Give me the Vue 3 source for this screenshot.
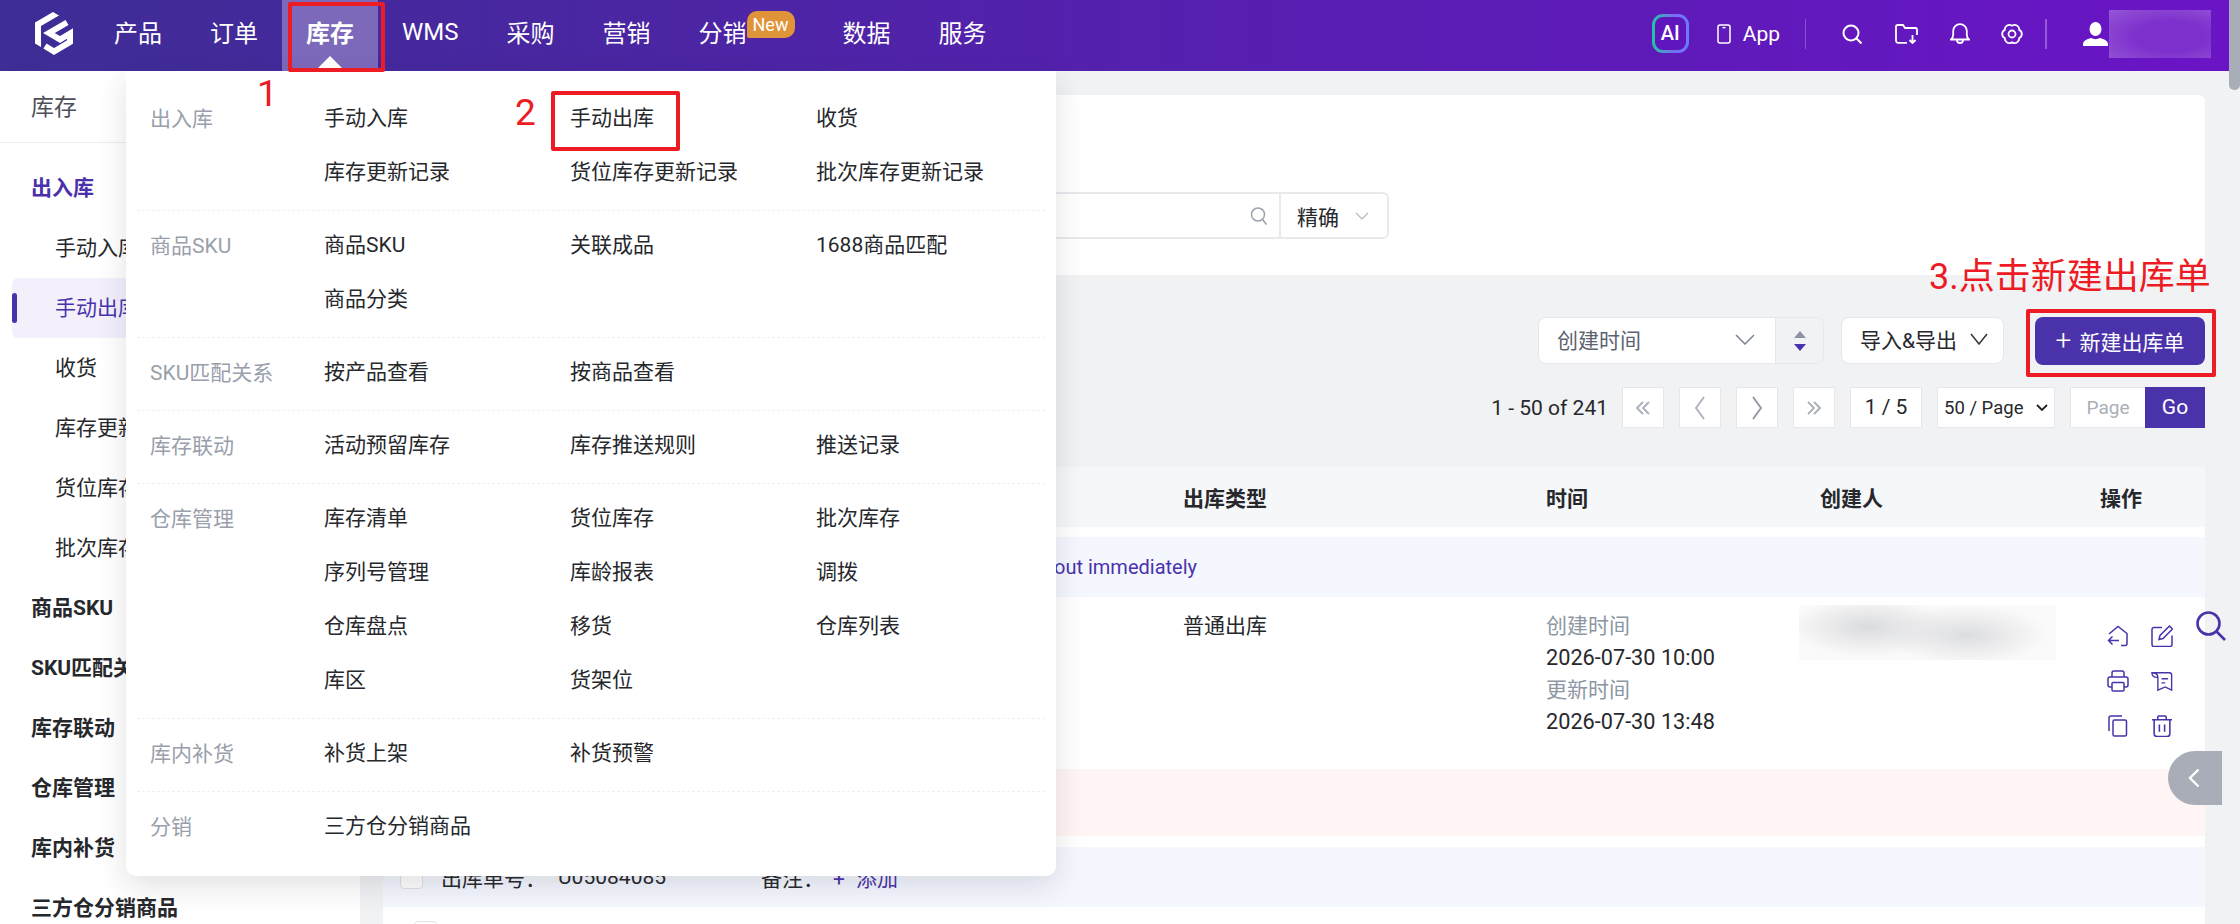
<template>
  <div class="page">
    <header class="topbar">
      <svg class="logo" viewBox="0 0 38 43">
        <polygon points="18,0 0,10.5 0,31.5 6,35 6,14 24,3.5" fill="#fff" />
        <path d="M32 10.5 L14 21 L25 27.5 L35 21.5 V30 L19 39.5 L10 34" fill="none" stroke="#fff" stroke-width="6" />
      </svg>
      <nav class="nav">
        <div v-for="item in navItems" :key="item.name" class="nav-item" :class="{ active: item.active }">
          {{ item.name }}
          <span v-if="item.badge" class="badge">{{ item.badge }}</span>
        </div>
      </nav>
      <div class="top-right">
        <div class="ai-box"><span>AI</span></div>
        <svg class="ic-phone" viewBox="0 0 14 20" fill="none" stroke="#fff" stroke-width="1.5">
          <rect x="1" y="1" width="12" height="18" rx="2" />
          <path d="M5.5 3.6h3" />
        </svg>
        <span class="app-text">App</span>
        <i class="vline"></i>
        <svg class="ic ic-search" viewBox="0 0 20 20" fill="none" stroke="#fff" stroke-width="2">
          <circle cx="9" cy="9" r="7.5" />
          <path d="M14.5 14.5 19.5 19.5" />
        </svg>
        <svg class="ic ic-folder" viewBox="0 0 23 20" fill="none" stroke="#fff" stroke-width="1.8">
          <path d="M12 18.8H3a2 2 0 0 1-2-2V2.5A1.5 1.5 0 0 1 2.5 1H8l2 3h10.5a1.5 1.5 0 0 1 1.5 1.5V11" />
          <path d="M17.5 11v8M14.5 16l3 3 3-3" />
        </svg>
        <svg class="ic ic-bell" viewBox="0 0 20 21" fill="none" stroke="#fff" stroke-width="1.8">
          <path d="M1 16.5c1.6-1.2 2.2-3 2.2-5V8a6.8 6.8 0 0 1 13.6 0v3.500c0 2 .6 3.800 2.200 5z" />
          <path d="M7 17a3 3 0 0 0 6 0" />
        </svg>
        <svg class="ic ic-gear" viewBox="0 0 22 22" fill="none" stroke="#fff" stroke-width="1.800">
          <path d="M11 2.700A4.600 4.600 0 0 1 18.190 6.850A4.600 4.600 0 0 1 18.190 15.150A4.600 4.600 0 0 1 11 19.300A4.600 4.600 0 0 1 3.810 15.150A4.600 4.600 0 0 1 3.810 6.850A4.600 4.600 0 0 1 11 2.700z" />
          <circle cx="11" cy="11" r="3.500" />
        </svg>
        <i class="vline wide"></i>
        <svg class="ic-user" viewBox="0 0 25 24" fill="#fff">
          <ellipse cx="12.500" cy="7" rx="6" ry="7" />
          <path d="M0 24v-2c0-3 4-5 8-6 2.500 1.500 6.500 1.500 9 0 4 1 8 3 8 6v2z" />
        </svg>
        <div class="user-blur"></div>
      </div>
    </header>

    <div class="body">
      <aside class="sidebar">
        <div class="side-title">库存</div>
        <div class="side-list">
          <div v-for="row in sideRows" :key="row.name" class="side-row" :class="row.type">{{ row.name }}</div>
        </div>
      </aside>

      <main class="main">
        <section class="filter-card">
          <div class="search-group">
            <div class="search-input">
              <svg class="search-ic" viewBox="0 0 18 20" fill="none" stroke="#9aa3ae" stroke-width="1.500">
                <circle cx="8" cy="8.500" r="6.500" />
                <path d="M12.500 13.500 16.500 18.500" />
              </svg>
            </div>
            <div class="search-mode">
              <span>精确</span>
              <svg class="chev small" viewBox="0 0 14 8" fill="none" stroke="#b3b8c1" stroke-width="1.200"><path d="M1 1l6 6 6-6" /></svg>
            </div>
          </div>
        </section>

        <div class="toolbar">
          <div class="sort-box">
            <div class="sort-select">
              <span>创建时间</span>
              <svg class="chev" viewBox="0 0 20 11" fill="none" stroke="#7b8490" stroke-width="1.500"><path d="M1 1l9 9 9-9" /></svg>
            </div>
            <div class="sort-dir">
              <i class="tri up"></i>
              <i class="tri down"></i>
            </div>
          </div>
          <div class="io-btn">
            导入&amp;导出
            <svg class="chev dark" viewBox="0 0 18 12" fill="none" stroke="#333" stroke-width="1.500"><path d="M1 1l8 10 8-10" /></svg>
          </div>
          <div class="create-btn"><span class="plus">+</span>新建出库单</div>
        </div>

        <div class="pager">
          <span class="pager-total">1 - 50 of 241</span>
          <div class="pg-btn">
            <svg viewBox="0 0 16 16" fill="none" stroke="#a9afb9" stroke-width="1.800"><path d="M8 2 2 8l6 6M14 2 8 8l6 6" /></svg>
          </div>
          <div class="pg-btn">
            <svg class="tall" viewBox="0 0 12 24" fill="none" stroke="#a9afb9" stroke-width="1.800"><path d="M10 1 2 12l8 11" /></svg>
          </div>
          <div class="pg-btn">
            <svg class="tall" viewBox="0 0 12 24" fill="none" stroke="#8d939e" stroke-width="1.800"><path d="M2 1l8 11-8 11" /></svg>
          </div>
          <div class="pg-btn">
            <svg viewBox="0 0 16 16" fill="none" stroke="#a9afb9" stroke-width="1.800"><path d="M2 2l6 6-6 6M8 2l6 6-6 6" /></svg>
          </div>
          <div class="pg-num">1 / 5</div>
          <div class="pg-size">
            <span>50 / Page</span>
            <svg viewBox="0 0 12 8" fill="none" stroke="#222" stroke-width="1.800"><path d="M1 1l5 5 5-5" /></svg>
          </div>
          <div class="pg-jump">
            <div class="pg-input">Page</div>
            <div class="pg-go">Go</div>
          </div>
        </div>

        <section class="table">
          <div class="tr thead">
            <span></span>
            <span>出库类型</span>
            <span>时间</span>
            <span>创建人</span>
            <span>操作</span>
          </div>
          <div class="band blue first">
            <span class="notice">out immediately</span>
          </div>
          <div class="tr item">
            <span></span>
            <div class="cell">普通出库</div>
            <div class="cell times">
              <div class="muted">创建时间</div>
              <div class="stamp">2026-07-30 10:00</div>
              <div class="muted">更新时间</div>
              <div class="stamp">2026-07-30 13:48</div>
            </div>
            <div class="cell"><div class="creator-blur"></div></div>
            <div class="actions">
              <svg viewBox="0 0 22 22" fill="none" stroke="#4a32ab" stroke-width="1.500">
                <path d="M2 9 11 1.500 20 8.500v10a2 2 0 0 1-2 2h-4" />
                <path d="M12 15.500H1.500M5.500 11.500l-4 4 4 4" />
              </svg>
              <svg viewBox="0 0 22 22" fill="none" stroke="#4a32ab" stroke-width="1.500">
                <path d="M11 2.500H3a2 2 0 0 0-2 2v15a2 2 0 0 0 2 2h16a2 2 0 0 0 2-2v-9" />
                <path d="M8 14.500l1-4L18.500 1l3 3-9.500 9.500z" />
              </svg>
              <svg viewBox="0 0 22 22" fill="none" stroke="#4a32ab" stroke-width="1.500">
                <path d="M5 7V3a2 2 0 0 1 2-2h8a2 2 0 0 1 2 2v4" />
                <path d="M5 17H3a2 2 0 0 1-2-2V9a2 2 0 0 1 2-2h16a2 2 0 0 1 2 2v6a2 2 0 0 1-2 2h-2" />
                <rect x="5" y="12.500" width="12" height="8.500" rx="1" />
              </svg>
              <svg viewBox="0 0 24 22" fill="none" stroke="#4a32ab" stroke-width="1.500">
                <path d="M1 2h19a2.500 2.500 0 0 1 2.500 2.500V21l-7-3.500L7.500 21V7C7.500 4 5 2 1 2c0 3 2 5 6 5" />
                <path d="M11.500 8.500h7M11.500 13h4" />
              </svg>
              <svg viewBox="0 0 20 22" fill="none" stroke="#4a32ab" stroke-width="1.500">
                <path d="M14 1H3a2 2 0 0 0-2 2v13" />
                <rect x="5" y="5" width="13.500" height="16" rx="1.500" />
              </svg>
              <svg viewBox="0 0 20 21" fill="none" stroke="#4a32ab" stroke-width="1.500">
                <path d="M.5 4.500h19M6 4.500V2a1 1 0 0 1 1-1h6a1 1 0 0 1 1 1v2.500" />
                <path d="M2.500 4.500V18a2.500 2.500 0 0 0 2.500 2.500h10a2.500 2.500 0 0 0 2.500-2.500V4.500" />
                <path d="M7.500 9v7M12.500 9v7" />
              </svg>
            </div>
          </div>
          <div class="band pink"></div>
          <div class="band blue second">
            <i class="check"></i>
            <span class="order-label">出库单号：</span>
            <span class="order-no">U05084085</span>
            <span class="note-label">备注：</span>
            <span class="note-add">+ 添加</span>
          </div>
          <div class="next-row"><i class="check"></i></div>
        </section>
      </main>
    </div>

    <!-- dropdown menu under the active nav item -->
    <div class="mega-menu">
      <div v-for="group in menuGroups" :key="group.label" class="menu-group">
        <div class="menu-label">{{ group.label }}</div>
        <div class="menu-links">
          <span v-for="(link, i) in group.links" :key="i" class="menu-link">{{ link }}</span>
        </div>
      </div>
    </div>

    <!-- tutorial marks painted on the screenshot -->
    <div class="mark box-nav"></div>
    <div class="mark box-link"></div>
    <div class="mark box-create"></div>
    <div class="mark-text num-1">1</div>
    <div class="mark-text num-2">2</div>
    <div class="mark-text step-3">3.点击新建出库单</div>

    <div class="scroll-thumb"></div>
    <svg class="float-search" viewBox="0 0 30 30" fill="none" stroke="#4a32ab" stroke-width="2.600">
      <circle cx="12.500" cy="12.500" r="11" />
      <path d="M20.500 20.500 29 29" />
    </svg>
    <div class="collapse-tab">
      <svg viewBox="0 0 12 20" fill="none" stroke="#fff" stroke-width="2.400"><path d="M10.500 1.500 2 10l8.500 8.500" /></svg>
    </div>
  </div>
</template>

<script setup>
const navItems = [
  { name: '产品' },
  { name: '订单' },
  { name: '库存', active: true },
  { name: 'WMS' },
  { name: '采购' },
  { name: '营销' },
  { name: '分销', badge: 'New' },
  { name: '数据' },
  { name: '服务' }
];

const sideRows = [
  { name: '出入库', type: 'head current' },
  { name: '手动入库', type: 'sub' },
  { name: '手动出库', type: 'sub selected' },
  { name: '收货', type: 'sub' },
  { name: '库存更新记录', type: 'sub' },
  { name: '货位库存', type: 'sub' },
  { name: '批次库存', type: 'sub' },
  { name: '商品SKU', type: 'head' },
  { name: 'SKU匹配关系', type: 'head' },
  { name: '库存联动', type: 'head' },
  { name: '仓库管理', type: 'head' },
  { name: '库内补货', type: 'head' },
  { name: '三方仓分销商品', type: 'head' }
];

const menuGroups = [
  { label: '出入库', links: ['手动入库', '手动出库', '收货', '库存更新记录', '货位库存更新记录', '批次库存更新记录'] },
  { label: '商品SKU', links: ['商品SKU', '关联成品', '1688商品匹配', '商品分类'] },
  { label: 'SKU匹配关系', links: ['按产品查看', '按商品查看'] },
  { label: '库存联动', links: ['活动预留库存', '库存推送规则', '推送记录'] },
  { label: '仓库管理', links: ['库存清单', '货位库存', '批次库存', '序列号管理', '库龄报表', '调拨', '仓库盘点', '移货', '仓库列表', '库区', '货架位'] },
  { label: '库内补货', links: ['补货上架', '补货预警'] },
  { label: '分销', links: ['三方仓分销商品'] }
];
</script>

<style>
html,
body {
  margin: 0;
  background: #f1f2f4;
}
</style>

<style scoped>
.page {
  position: relative;
  width: 2240px;
  height: 924px;
  overflow: hidden;
  background: #f1f2f4;
  font-family: Roboto, "Noto Sans CJK SC", sans-serif;
  font-size: 21px;
  color: #26282c;
}

/* top bar */
.topbar {
  display: flex;
  align-items: center;
  width: 2229px;
  height: 71px;
  background: linear-gradient(90deg, #3e2d95, #6a14c6);
  color: #fff;
}

.logo {
  width: 38px;
  height: 43px;
  margin: 0 17px 4px 35px;
  flex: none;
}

.nav {
  display: flex;
  height: 100%;
}

.nav-item {
  position: relative;
  display: flex;
  align-items: center;
  padding: 0 24px 8px;
  font-size: 24px;
  white-space: nowrap;
}

.nav-item.active {
  background: #7c69ba;
  font-weight: 700;
}

.nav-item.active::after {
  content: "";
  position: absolute;
  left: 36px;
  bottom: 3px;
  border-left: 12px solid transparent;
  border-right: 12px solid transparent;
  border-bottom: 12px solid #fff;
}

.badge {
  width: 48px;
  height: 27px;
  margin-top: -14px;
  border-radius: 10px 10px 10px 2px;
  background: #e0943a;
  font-size: 18px;
  line-height: 27px;
  text-align: center;
}

.top-right {
  display: flex;
  align-items: center;
  margin-left: auto;
  height: 100%;
  padding-bottom: 4px;
  box-sizing: border-box;
}

.ai-box {
  width: 37px;
  height: 39px;
  padding: 3px;
  box-sizing: border-box;
  border-radius: 11px;
  background: linear-gradient(90deg, #1fc8a0, #7a6cf5 60%, #6a7cff);
}

.ai-box span {
  display: block;
  height: 100%;
  border-radius: 8px;
  background: #5f17bd;
  font-size: 20px;
  font-weight: 500;
  line-height: 33px;
  text-align: center;
}

.ic-phone {
  width: 14px;
  height: 20px;
  margin-left: 28px;
}

.app-text {
  margin-left: 12px;
  font-size: 21px;
}

.vline {
  width: 1px;
  height: 30px;
  margin-left: 25px;
  background: rgba(255, 255, 255, 0.25);
}

.vline.wide {
  width: 2px;
  height: 30px;
  margin-left: 22px;
  background: rgba(255, 255, 255, 0.3);
}

.ic {
  height: 20px;
  flex: none;
}

.ic-search {
  width: 20px;
  margin-left: 36px;
}

.ic-folder {
  width: 23px;
  margin-left: 33px;
}

.ic-bell {
  width: 20px;
  height: 21px;
  margin-left: 32px;
}

.ic-gear {
  width: 22px;
  height: 22px;
  margin-left: 31px;
}

.ic-user {
  width: 25px;
  height: 24px;
  margin-left: 36px;
}

.user-blur {
  width: 102px;
  height: 48px;
  margin-left: 1px;
  margin-right: 18px;
  background: radial-gradient(ellipse at 60% 55%, #7d30cc 40%, #9a5bd8 110%);
}

/* sidebar + main */
.body {
  display: flex;
  height: 853px;
}

.sidebar {
  flex: none;
  width: 360px;
  height: 100%;
  background: #fff;
}

.side-title {
  height: 71px;
  padding-left: 31px;
  border-bottom: 1px solid #eceef1;
  font-size: 23px;
  line-height: 74px;
  color: #4c5058;
}

.side-list {
  padding-top: 15px;
}

.side-row {
  position: relative;
  height: 60px;
  line-height: 60px;
  white-space: nowrap;
}

.side-row.head {
  padding-left: 31px;
  font-weight: 700;
}

.side-row.current {
  color: #4a32ab;
}

.side-row.sub {
  padding-left: 55px;
}

.side-row.selected {
  margin-left: 12px;
  padding-left: 43px;
  border-radius: 6px 0 0 6px;
  background: #f3f0fc;
  color: #4a32ab;
}

.side-row.selected::before {
  content: "";
  position: absolute;
  left: 0;
  top: 15px;
  width: 5px;
  height: 30px;
  border-radius: 3px;
  background: #4a32ab;
}

.main {
  flex: 1;
  min-width: 0;
  padding: 24px 35px 0 23px;
}

.filter-card {
  display: flex;
  justify-content: flex-end;
  height: 180px;
  padding: 97px 816px 0 0;
  box-sizing: border-box;
  border-radius: 6px 6px 0 0;
  background: #fff;
}

.search-group {
  display: flex;
  height: 47px;
  box-sizing: border-box;
  border: 2px solid #e8e9ed;
  border-radius: 6px;
}

.search-input {
  display: flex;
  align-items: center;
  justify-content: flex-end;
  width: 560px;
  padding-right: 11px;
  box-sizing: border-box;
  border-right: 2px solid #e8e9ed;
}

.search-ic {
  width: 18px;
  height: 20px;
}

.search-mode {
  display: flex;
  align-items: center;
  width: 106px;
  padding-left: 16px;
  box-sizing: border-box;
}

.chev {
  width: 20px;
  height: 11px;
  flex: none;
}

.chev.small {
  width: 14px;
  height: 8px;
  margin-left: 16px;
}

.toolbar {
  display: flex;
  justify-content: flex-end;
  gap: 17px;
  margin-top: 42px;
}

.sort-box {
  display: flex;
  width: 286px;
  height: 47px;
  box-sizing: border-box;
  border: 1px solid #e6e7ec;
  border-radius: 8px;
  background: #fff;
  overflow: hidden;
}

.sort-select {
  display: flex;
  align-items: center;
  justify-content: space-between;
  flex: 1;
  padding: 0 20px 3px 18px;
  color: #5c6370;
}

.sort-dir {
  display: flex;
  flex-direction: column;
  align-items: center;
  justify-content: center;
  gap: 6px;
  width: 47px;
  border-left: 1px solid #e6e7ec;
  background: #f1f2f4;
}

.tri {
  border-left: 6px solid transparent;
  border-right: 6px solid transparent;
}

.tri.up {
  border-bottom: 7px solid #8c93a0;
}

.tri.down {
  border-top: 7px solid #4a32ab;
}

.io-btn {
  display: flex;
  align-items: center;
  gap: 13px;
  width: 163px;
  height: 47px;
  padding: 0 0 3px 18px;
  box-sizing: border-box;
  border: 1px solid #e6e7ec;
  border-radius: 8px;
  background: #fff;
}

.chev.dark {
  width: 18px;
  height: 12px;
}

.create-btn {
  display: flex;
  align-items: center;
  justify-content: center;
  width: 170px;
  height: 48px;
  margin-left: 14px;
  border-radius: 8px;
  background: #4a32ab;
  color: #fff;
}

.plus {
  margin-right: 8px;
  font-size: 28px;
  font-weight: 300;
  line-height: 1;
}

.pager {
  display: flex;
  align-items: center;
  justify-content: flex-end;
  gap: 15px;
  height: 41px;
  margin-top: 22px;
}

.pager-total {
  margin-right: -1px;
}

.pg-btn {
  display: flex;
  align-items: center;
  justify-content: center;
  width: 42px;
  height: 41px;
  box-sizing: border-box;
  border: 1px solid #e6e7ec;
  background: #fff;
}

.pg-btn svg {
  width: 16px;
  height: 16px;
}

.pg-btn svg.tall {
  width: 12px;
  height: 24px;
}

.pg-num {
  width: 72px;
  height: 41px;
  box-sizing: border-box;
  border: 1px solid #e6e7ec;
  background: #fff;
  line-height: 39px;
  text-align: center;
}

.pg-size {
  display: flex;
  align-items: center;
  justify-content: space-between;
  width: 118px;
  height: 41px;
  padding: 0 6px 0 6px;
  box-sizing: border-box;
  border: 1px solid #e6e7ec;
  background: #fff;
  font-size: 18.5px;
}

.pg-size svg {
  width: 12px;
  height: 8px;
}

.pg-jump {
  display: flex;
  height: 41px;
}

.pg-input {
  width: 75px;
  box-sizing: border-box;
  border: 1px solid #e6e7ec;
  border-right: 0;
  background: #fff;
  color: #a9afb9;
  font-size: 19px;
  line-height: 39px;
  text-align: center;
}

.pg-go {
  width: 60px;
  background: #4a32ab;
  color: #fff;
  line-height: 41px;
  text-align: center;
}

/* table */
.table {
  height: 460px;
  margin-top: 39px;
  background: #fff;
}

.tr {
  display: grid;
  grid-template-columns: 800px 363px 274px 280px 105px;
}

.thead {
  height: 60px;
  align-items: center;
  background: #f6f7f9;
  font-weight: 700;
}

.band {
  height: 60px;
  box-sizing: border-box;
}

.band.blue {
  background: #f4f7fe;
}

.band.first {
  display: flex;
  align-items: center;
  margin-top: 10px;
  padding-left: 671px;
}

.notice {
  color: #4a32ab;
  font-size: 20px;
}

.item {
  height: 172px;
}

.cell {
  padding-top: 13px;
  line-height: 32px;
}

.muted {
  color: #8d96a3;
}

.stamp {
  font-size: 21.7px;
}

.creator-blur {
  width: 257px;
  height: 55px;
  margin: -5px 0 0 -21px;
  background:
    radial-gradient(ellipse 80px 30px at 70px 22px, #dadbdd, transparent),
    radial-gradient(ellipse 80px 30px at 168px 30px, #dcdddf, transparent),
    #fafafa;
}

.actions {
  display: grid;
  grid-template-columns: 22px 22px;
  grid-auto-rows: 22px;
  gap: 23px 22px;
  padding: 28px 0 0 7px;
}

.actions svg {
  width: 22px;
  height: 22px;
}

.band.pink {
  height: 67px;
  background: #fff5f4;
}

.band.second {
  display: flex;
  align-items: center;
  margin-top: 11px;
  padding-left: 17px;
}

.check {
  display: block;
  flex: none;
  width: 23px;
  height: 23px;
  box-sizing: border-box;
  border: 1px solid #dfe1e6;
  border-radius: 4px;
  background: #fff;
}

.order-label {
  margin-left: 18px;
  width: 117px;
  flex: none;
}

.order-no {
  width: 203px;
  flex: none;
}

.note-label {
  width: 72px;
  flex: none;
}

.note-add {
  color: #4a32ab;
  word-spacing: 6px;
}

.next-row {
  padding: 14px 0 0 31px;
}

/* dropdown */
.mega-menu {
  position: absolute;
  left: 126px;
  top: 71px;
  width: 930px;
  height: 805px;
  padding: 13px 11px 0;
  box-sizing: border-box;
  border-radius: 0 0 10px 10px;
  background: #fff;
  box-shadow: 0 10px 30px rgba(40, 44, 60, 0.14);
}

.menu-group {
  display: flex;
  padding: 5px 0 13px;
  border-bottom: 1px dashed #eef0f2;
}

.menu-group:last-child {
  border-bottom: 0;
}

.menu-label {
  flex: none;
  width: 187px;
  margin-bottom: -3px;
  padding: 3px 0 0 13px;
  box-sizing: border-box;
  color: #99a0ab;
  line-height: 54px;
  white-space: nowrap;
}

.menu-links {
  display: grid;
  grid-template-columns: repeat(3, 246px);
  grid-auto-rows: 54px;
  align-items: center;
}

.menu-link {
  white-space: nowrap;
}

/* tutorial marks */
.mark {
  position: absolute;
  box-sizing: border-box;
  border: 4px solid #ed1c24;
  border-radius: 2px;
}

.box-nav {
  left: 288px;
  top: 2px;
  width: 97px;
  height: 70px;
}

.box-link {
  left: 551px;
  top: 91px;
  width: 129px;
  height: 60px;
}

.box-create {
  left: 2026px;
  top: 309px;
  width: 190px;
  height: 68px;
}

.mark-text {
  position: absolute;
  color: #ed1c24;
  line-height: 1;
  white-space: nowrap;
}

.num-1 {
  left: 257px;
  top: 75px;
  font-size: 37px;
}

.num-2 {
  left: 515px;
  top: 94px;
  font-size: 37px;
}

.step-3 {
  left: 1929px;
  top: 259px;
  font-size: 36px;
}

/* floating bits at the right edge */
.scroll-thumb {
  position: absolute;
  right: 0;
  top: 0;
  width: 11px;
  height: 90px;
  border-radius: 0 0 5px 5px;
  background: #a9adb8;
}

.float-search {
  position: absolute;
  left: 2196px;
  top: 611px;
  width: 30px;
  height: 30px;
}

.collapse-tab {
  position: absolute;
  left: 2168px;
  top: 751px;
  display: flex;
  align-items: center;
  width: 54px;
  height: 54px;
  padding-left: 20px;
  box-sizing: border-box;
  border-radius: 27px 0 0 27px;
  background: #a9adb8;
}

.collapse-tab svg {
  width: 12px;
  height: 20px;
}
</style>
